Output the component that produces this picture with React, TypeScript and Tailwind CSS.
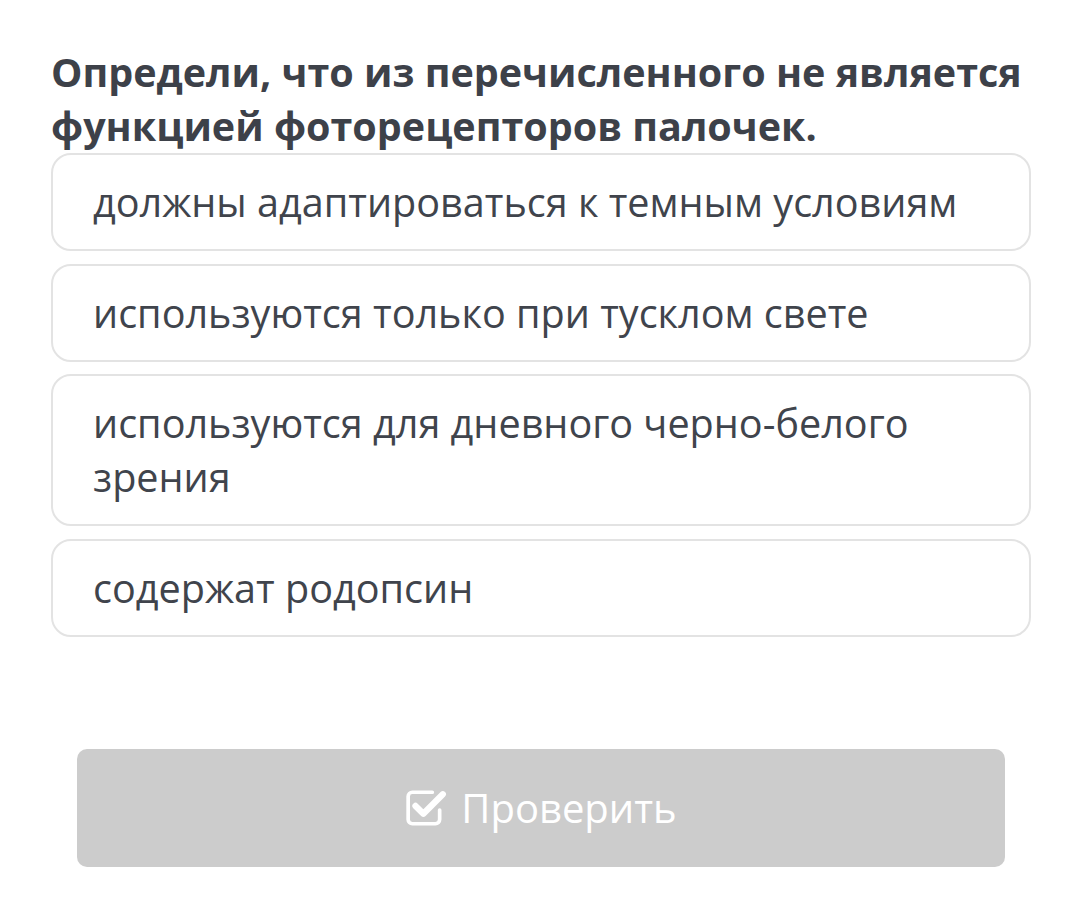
import React from "react";

const options = [
  "должны адаптироваться к темным условиям",
  "используются только при тусклом свете",
  "используются для дневного черно-белого зрения",
  "содержат родопсин",
];

export default function App() {
  return (
    <div
      className="min-h-[923px] w-[1080px] bg-white pl-[51px] pr-[49px] pt-[45px]"
      style={{ fontFamily: '"Open Sans", sans-serif' }}
    >
      <h1 className="text-[39.5px] font-bold leading-[54px] text-[#3d4149]">
        Определи, что из перечисленного не является функцией фоторецепторов палочек.
      </h1>
      <div className="flex flex-col gap-[12.5px]">
        {options.map((text) => (
          <div
            key={text}
            className="rounded-[20px] border-2 border-[#e3e3e3] py-[20px] pl-[40px] pr-[60px] text-[39.6px] leading-[54px] text-[#40444c]"
          >
            {text}
          </div>
        ))}
      </div>
      <div className="mt-[112px] px-[26px]">
        <button className="flex h-[118px] w-full items-center justify-center gap-[14px] rounded-[10px] bg-[#cccccc] text-[40px] text-white">
          <svg width="42" height="42" viewBox="0 0 40 40" fill="none">
            <path
              d="M33 22v9a4 4 0 0 1-4 4H7a4 4 0 0 1-4-4V9a4 4 0 0 1 4-4h19"
              stroke="white"
              strokeWidth="3.5"
              strokeLinecap="round"
            />
            <path
              d="M10 18l7.5 7.5L36 7"
              stroke="white"
              strokeWidth="6"
              strokeLinecap="round"
              strokeLinejoin="round"
            />
          </svg>
          <span>Проверить</span>
        </button>
      </div>
    </div>
  );
}
